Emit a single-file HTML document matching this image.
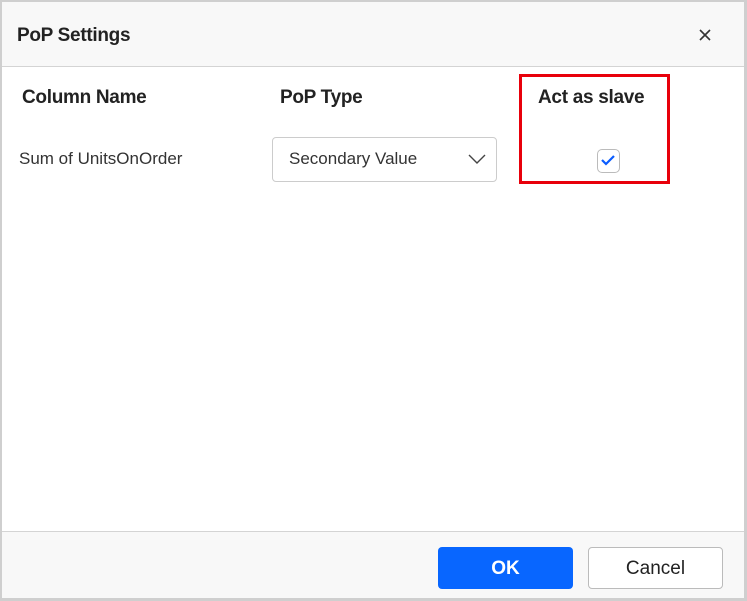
<!DOCTYPE html>
<html><head><style>
*{box-sizing:border-box;margin:0;padding:0}
body{width:747px;height:601px;background:#fff;font-family:"Liberation Sans",sans-serif;color:#333;position:relative;overflow:hidden}
.frame{position:absolute;left:0;top:0;width:747px;height:601px;border:2px solid #cfcfcf;border-right-width:3px;border-bottom-width:3px}
.hdr{position:absolute;left:2px;top:2px;width:742px;height:65px;background:#f8f8f8;border-bottom:1px solid #d4d4d4}
.ftr{position:absolute;left:2px;top:531px;width:742px;height:67px;background:#f8f8f8;border-top:1px solid #d4d4d4}
.t{position:absolute;white-space:nowrap}
.b{font-weight:bold;font-size:19px;color:#222;letter-spacing:-0.3px}
.red{position:absolute;left:519px;top:74px;width:151px;height:110px;border:3px solid #e8000b}
.dd{position:absolute;left:272px;top:137px;width:225px;height:45px;border:1px solid #ccc;border-radius:4px}
.cb{position:absolute;left:597px;top:149px;width:23px;height:24px;border:1px solid #bbb;border-radius:5px;background:#fff}
.btn{position:absolute;top:547px;height:42px;border-radius:4px;font-size:19px;text-align:center;line-height:44px}
</style></head><body>
<div class="frame"></div>
<div class="hdr"></div>
<div class="t b" style="left:17px;top:25px">PoP Settings</div>
<svg class="t" style="left:699px;top:29px" width="12" height="12" viewBox="0 0 12 12"><path d="M1 1L11 11M11 1L1 11" stroke="#333" stroke-width="1.6"/></svg>
<div class="t b" style="left:22px;top:87px">Column Name</div>
<div class="t b" style="left:280px;top:87px">PoP Type</div>
<div class="t b" style="left:538px;top:87px">Act as slave</div>
<div class="red"></div>
<div class="t" style="left:19px;top:149px;font-size:17px;color:#333">Sum of UnitsOnOrder</div>
<div class="dd"></div>
<div class="t" style="left:289px;top:149px;font-size:17px;color:#333">Secondary Value</div>
<svg class="t" style="left:468px;top:153px" width="18" height="12" viewBox="0 0 18 12"><path d="M1 2L9 10L17 2" fill="none" stroke="#444" stroke-width="1.4"/></svg>
<div class="cb"></div>
<svg class="t" style="left:600px;top:153px" width="16" height="14" viewBox="0 0 16 14"><path d="M2 7L6 11L14 3" fill="none" stroke="#0a5cff" stroke-width="2.2"/></svg>
<div class="ftr"></div>
<div class="btn" style="left:438px;width:135px;background:#0866ff;color:#fff;font-weight:bold">OK</div>
<div class="btn" style="left:588px;width:135px;background:#fff;border:1px solid #bbb;color:#222;line-height:42px">Cancel</div>
</body></html>
